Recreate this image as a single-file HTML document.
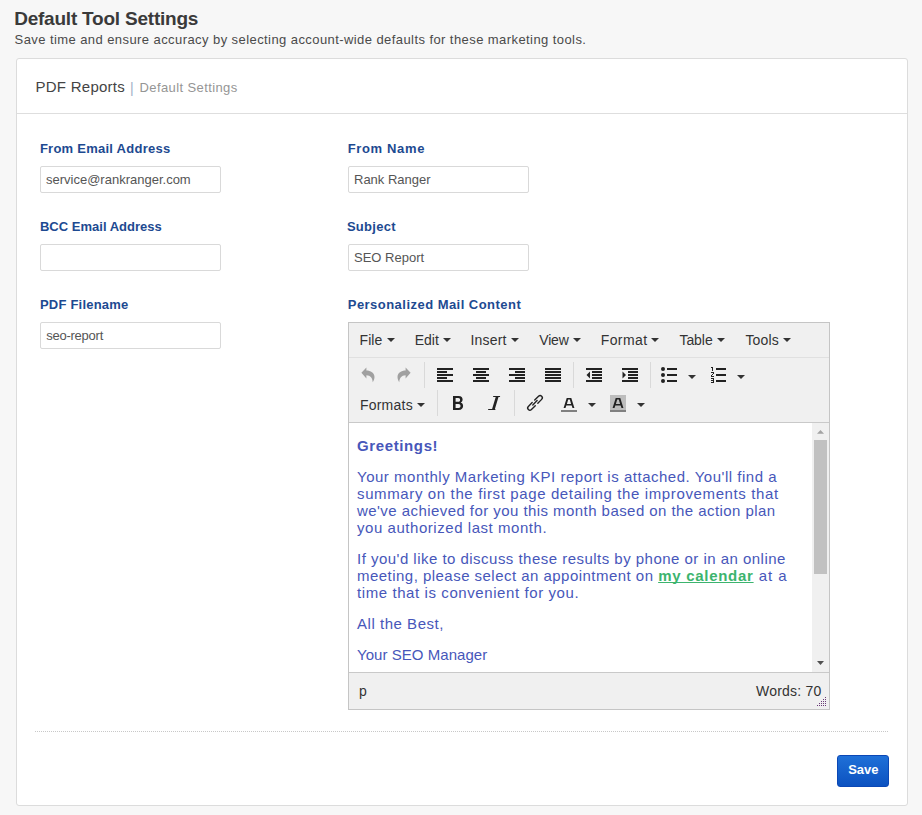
<!DOCTYPE html>
<html><head><meta charset="utf-8">
<style>
*{box-sizing:border-box}
html,body{margin:0;padding:0}
body{width:922px;height:815px;overflow:hidden;background:#f7f7f7;position:relative;font-family:"Liberation Sans",sans-serif;}
.a{position:absolute;white-space:nowrap}
.t{line-height:20px;height:20px}
#title{left:15px;top:10px;font-size:18px;font-weight:bold;color:#3a3a3a;letter-spacing:0.2px}
#sub{left:15px;top:30px;font-size:13px;color:#4a4a4a;letter-spacing:0.4px}
#panel{left:16px;top:58px;width:892px;height:748px;border:1px solid #dcdcdc;border-radius:3px;background:#fff}
#hdiv{left:17px;top:113px;width:890px;height:1px;background:#dedede}
#hname{left:35px;top:77px;font-size:15px;color:#444;letter-spacing:0.3px}
#hsep{left:130px;top:78px;font-size:14px;color:#9fb0c8}
#hdef{left:139px;top:78px;font-size:13px;color:#8a8a8a;letter-spacing:0.5px}
.lbl{font-size:13px;font-weight:bold;color:#1d4a91;letter-spacing:0.2px}
.inp{position:absolute;width:181px;height:27px;border:1px solid #d9d9d9;border-radius:2px;background:#fff}
.itx{font-size:13px;color:#555}
#ed{left:348px;top:322px;width:482px;height:388px;border:1px solid #c5c5c5;background:#f0f0f0}
#mdiv{left:349px;top:357px;width:480px;height:1px;background:#e0e0e0}
#tdiv{left:349px;top:422px;width:480px;height:1px;background:#c9c9c9}
#content{left:349px;top:423px;width:463px;height:249px;background:#fff}
#sdiv{left:349px;top:672px;width:480px;height:1px;background:#c9c9c9}
#track{left:812px;top:423px;width:17px;height:249px;background:#f0f0f0}
#thumb{left:814px;top:440px;width:13px;height:134px;background:#c1c1c1}
.mi{font-size:14px;color:#333;line-height:20px;height:20px}
.ct{font-size:15px;color:#4757ba;line-height:17px;height:17px}
.ct b{font-weight:bold}
.lnk{font-weight:bold;color:#3cb46e;text-decoration:underline;text-decoration-skip-ink:none}
#dots{left:35px;top:731px;width:854px;height:1px;background-image:linear-gradient(to right,#c8c8c8 50%,transparent 50%);background-size:2px 1px}
#save{left:837px;top:755px;width:52px;height:32px;border:1px solid #0b47b5;border-radius:3px;background:linear-gradient(#1f70d8,#0c52c0)}
#savet{left:849px;top:760px;font-size:13px;font-weight:bold;color:#fff;letter-spacing:-0.2px}
svg.ov{position:absolute;left:0;top:0}
</style></head>
<body>
<div id="panel" class="a"></div>
<div id="hdiv" class="a"></div>
<div id="hsep" class="a t">|</div>


<div class="inp" style="left:40px;top:166px"></div>
<div class="inp" style="left:40px;top:244px"></div>
<div class="inp" style="left:40px;top:322px"></div>
<div class="inp" style="left:348px;top:166px"></div>
<div class="inp" style="left:348px;top:244px"></div>

<div id="ed" class="a"></div>
<div id="mdiv" class="a"></div>
<div id="tdiv" class="a"></div>
<div id="content" class="a"></div>
<div id="sdiv" class="a"></div>
<div id="track" class="a"></div>
<div id="thumb" class="a"></div>


<div class="a ct" style="left:357.0px;top:437px;letter-spacing:0.621px"><b>Greetings!</b></div>
<div class="a ct" style="left:357.0px;top:468px;letter-spacing:0.514px">Your monthly Marketing KPI report is attached. You&#39;ll find a</div>
<div class="a ct" style="left:357.0px;top:485px;letter-spacing:0.628px">summary on the first page detailing the improvements that</div>
<div class="a ct" style="left:357.0px;top:502px;letter-spacing:0.440px">we&#39;ve achieved for you this month based on the action plan</div>
<div class="a ct" style="left:357.0px;top:519px;letter-spacing:0.547px">you authorized last month.</div>
<div class="a ct" style="left:357.0px;top:550px;letter-spacing:0.475px">If you&#39;d like to discuss these results by phone or in an online</div>
<div class="a ct" style="left:357.0px;top:567px;letter-spacing:0.936px"><span style="letter-spacing:0.47px">meeting, please select an appointment on </span><span class="lnk" style="letter-spacing:0.72px">my calendar</span> at a</div>
<div class="a ct" style="left:357.0px;top:584px;letter-spacing:0.586px">time that is convenient for you.</div>
<div class="a ct" style="left:357.0px;top:615px;letter-spacing:0.530px">All the Best,</div>
<div class="a ct" style="left:357.0px;top:646px;letter-spacing:0.045px">Your SEO Manager</div>
<div id="title" class="a t" style="left:14.15px;top:9px;font-size:19px;font-weight:bold;color:#3a3a3a;letter-spacing:-0.216px">Default Tool Settings</div>
<div id="sub" class="a t" style="left:14.58px;top:30px;font-size:13px;color:#4a4a4a;letter-spacing:0.423px">Save time and ensure accuracy by selecting account-wide defaults for these marketing tools.</div>
<div id="hname" class="a t" style="left:35.50px;top:77px;font-size:15px;color:#444;letter-spacing:0.259px">PDF Reports</div>
<div id="hdef" class="a t" style="left:139.53px;top:78px;font-size:13px;color:#959595;letter-spacing:0.396px">Default Settings</div>
<div id="l1" class="a t" style="left:39.90px;top:139px;font-size:13px;font-weight:bold;color:#1d4a91;letter-spacing:0.253px">From Email Address</div>
<div id="l2" class="a t" style="left:39.90px;top:217px;font-size:13px;font-weight:bold;color:#1d4a91;letter-spacing:0.019px">BCC Email Address</div>
<div id="l3" class="a t" style="left:39.90px;top:295px;font-size:13px;font-weight:bold;color:#1d4a91;letter-spacing:0.222px">PDF Filename</div>
<div id="l4" class="a t" style="left:347.69px;top:139px;font-size:13px;font-weight:bold;color:#1d4a91;letter-spacing:0.652px">From Name</div>
<div id="l5" class="a t" style="left:346.90px;top:217px;font-size:13px;font-weight:bold;color:#1d4a91;letter-spacing:0.295px">Subject</div>
<div id="l6" class="a t" style="left:347.76px;top:295px;font-size:13px;font-weight:bold;color:#1d4a91;letter-spacing:0.467px">Personalized Mail Content</div>
<div id="i1" class="a t" style="left:46.00px;top:170px;font-size:13px;color:#555;letter-spacing:0.000px">service@rankranger.com</div>
<div id="i2" class="a t" style="left:46.18px;top:326px;font-size:13px;color:#555;letter-spacing:-0.242px">seo-report</div>
<div id="i3" class="a t" style="left:354.00px;top:170px;font-size:13px;color:#555;letter-spacing:0.000px">Rank Ranger</div>
<div id="i4" class="a t" style="left:354.00px;top:248px;font-size:13px;color:#555;letter-spacing:0.000px">SEO Report</div>
<div id="m1" class="a t" style="left:359.52px;top:330px;font-size:14px;color:#333;letter-spacing:0.071px">File</div>
<div id="m2" class="a t" style="left:414.76px;top:330px;font-size:14px;color:#333;letter-spacing:-0.031px">Edit</div>
<div id="m3" class="a t" style="left:470.46px;top:330px;font-size:14px;color:#333;letter-spacing:0.195px">Insert</div>
<div id="m4" class="a t" style="left:539.25px;top:330px;font-size:14px;color:#333;letter-spacing:-0.188px">View</div>
<div id="m5" class="a t" style="left:600.73px;top:330px;font-size:14px;color:#333;letter-spacing:0.398px">Format</div>
<div id="m6" class="a t" style="left:679.44px;top:330px;font-size:14px;color:#333;letter-spacing:-0.051px">Table</div>
<div id="m7" class="a t" style="left:745.44px;top:330px;font-size:14px;color:#333;letter-spacing:0.171px">Tools</div>
<div id="m8" class="a t" style="left:359.90px;top:395px;font-size:14px;color:#333;letter-spacing:0.235px">Formats</div>
<div id="s1" class="a t" style="left:359.00px;top:681px;font-size:14px;color:#333;letter-spacing:0.000px">p</div>
<div id="s2" class="a t" style="left:756.10px;top:681px;font-size:14px;color:#333;letter-spacing:0.204px">Words: 70</div>

<svg class="ov" width="922" height="815" viewBox="0 0 922 815">
 <g fill="#333">
  <!-- menu carets -->
  <path d="M387 338h8l-4 4z"/><path d="M443 338h8l-4 4z"/><path d="M511 338h8l-4 4z"/><path d="M573 338h8l-4 4z"/>
  <path d="M651 338h8l-4 4z"/><path d="M717 338h8l-4 4z"/><path d="M783 338h8l-4 4z"/>
  <!-- toolbar carets -->
  <path d="M688 375h8l-4 4z"/><path d="M737 375h8l-4 4z"/>
  <path d="M417 403h8l-4 4z"/><path d="M588 403h8l-4 4z"/><path d="M637 403h8l-4 4z"/>
 </g>
 <!-- separators -->
 <g fill="#d9d9d9">
  <rect x="424" y="362" width="1" height="26"/>
  <rect x="573" y="362" width="1" height="26"/>
  <rect x="650" y="362" width="1" height="26"/>
  <rect x="437" y="390" width="1" height="26"/>
  <rect x="514" y="390" width="1" height="26"/>
 </g>
 <!-- undo / redo -->
 <g fill="#a0a0a0">
  <path d="M361.4 372.8 L366.4 367.5 V370.6 C370.5 370.6 374.5 373 374.5 377 C374.5 379 373.5 381 372.7 382.2 C372.6 378.5 370.5 375.3 366.4 375.3 V378.5 Z"/>
  <path d="M410.6 372.8 L405.6 367.5 V370.6 C401.5 370.6 397.5 373 397.5 377 C397.5 379 398.5 381 399.3 382.2 C399.4 378.5 401.5 375.3 405.6 375.3 V378.5 Z"/>
 </g>
 <g fill="#222">
  <!-- align left -->
  <rect x="437" y="368" width="16" height="2"/><rect x="437" y="371" width="10" height="2"/><rect x="437" y="374" width="16" height="2"/><rect x="437" y="377" width="10" height="2"/><rect x="437" y="380" width="16" height="2"/>
  <!-- align center -->
  <rect x="473" y="368" width="16" height="2"/><rect x="476" y="371" width="10" height="2"/><rect x="473" y="374" width="16" height="2"/><rect x="476" y="377" width="10" height="2"/><rect x="473" y="380" width="16" height="2"/>
  <!-- align right -->
  <rect x="509" y="368" width="16" height="2"/><rect x="515" y="371" width="10" height="2"/><rect x="509" y="374" width="16" height="2"/><rect x="515" y="377" width="10" height="2"/><rect x="509" y="380" width="16" height="2"/>
  <!-- justify -->
  <rect x="545" y="368" width="16" height="2"/><rect x="545" y="371" width="16" height="2"/><rect x="545" y="374" width="16" height="2"/><rect x="545" y="377" width="16" height="2"/><rect x="545" y="380" width="16" height="2"/>
  <!-- outdent -->
  <rect x="586" y="368" width="16" height="2"/><rect x="592" y="371" width="10" height="2"/><rect x="592" y="374" width="10" height="2"/><rect x="592" y="377" width="10" height="2"/><rect x="586" y="380" width="16" height="2"/>
  <path d="M586.5 375 L590 371.5 L590 378.5 Z"/>
  <!-- indent -->
  <rect x="622" y="368" width="16" height="2"/><rect x="628" y="371" width="10" height="2"/><rect x="628" y="374" width="10" height="2"/><rect x="628" y="377" width="10" height="2"/><rect x="622" y="380" width="16" height="2"/>
  <path d="M626 375 L622.5 371.5 L622.5 378.5 Z"/>
  <!-- bullist -->
  <circle cx="663" cy="369" r="2"/><circle cx="663" cy="375" r="2"/><circle cx="663" cy="381" r="2"/>
  <rect x="667" y="368" width="10" height="2"/><rect x="667" y="374" width="10" height="2"/><rect x="667" y="380" width="10" height="2"/>
  <!-- numlist -->
  <rect x="716" y="368" width="10" height="2"/><rect x="716" y="374" width="10" height="2"/><rect x="716" y="380" width="10" height="2"/>
  <path d="M711 367h2v4h-1v-3h-1z"/>
  <path d="M711 372h3v2h-1v1h-1v1h2v1h-3v-2h1v-1h1v-1h-2z"/>
  <path d="M711 378h3v5h-3v-1h2v-1h-2v-1h2v-1h-2z"/>
  <!-- bold B -->
  <path fill-rule="evenodd" d="M453 396 H458.6 C461.5 396 462.6 397.8 462.6 399.5 C462.6 401 461.8 402 460.7 402.6 C462.3 403.1 463.1 404.4 463.1 406 C463.1 408.3 461.6 410 458.6 410 H453 Z M455.6 398.1 V401.8 H458.2 C459.5 401.8 460.1 401 460.1 399.95 C460.1 398.9 459.5 398.1 458.2 398.1 Z M455.6 403.9 V407.9 H458.5 C459.9 407.9 460.5 407 460.5 405.9 C460.5 404.8 459.9 403.9 458.5 403.9 Z"/>
  <!-- italic I -->
  <path d="M493.3 396 H500.2 L499.9 397.1 H498.5 L494.9 408.9 H495.5 L495.2 410 H488 L488.3 408.9 H492.1 L495.7 397.1 H493 Z"/>
 </g>
 <!-- link -->
 <g fill="none" stroke="#222" stroke-width="1.4" stroke-linecap="round">
  <path transform="translate(538.6 399.3) rotate(-45)" d="M-3.3 -2.2 L2.1 -2.2 A2.2 2.2 0 0 1 2.1 2.2 L-3.3 2.2"/>
  <path transform="translate(531.4 406.5) rotate(-45)" d="M3.3 -2.2 L-2.1 -2.2 A2.2 2.2 0 0 0 -2.1 2.2 L3.3 2.2"/>
  <path d="M532.8 404.9 L537.1 400.6"/>
 </g>
 <!-- forecolor -->
 <rect x="561" y="410" width="16" height="2" fill="#808080"/>
 <path fill="#222" fill-rule="evenodd" d="M566.7 398 L571.3 398 L574.4 408 L572.5 408 L571.7 405.5 L566.3 405.5 L565.5 408 L563.6 408 Z M568.2 399.6 L569.8 399.6 L571.1 403.9 L566.9 403.9 Z"/>
 <!-- backcolor -->
 <rect x="610" y="395" width="16" height="17" fill="#bdbdbd"/>
 <rect x="610" y="410" width="16" height="2" fill="#808080"/>
 <path fill="#222" fill-rule="evenodd" d="M615.7 398 L620.3 398 L623.4 408 L621.5 408 L620.7 405.5 L615.3 405.5 L614.5 408 L612.6 408 Z M617.2 399.6 L618.8 399.6 L620.1 403.9 L615.9 403.9 Z"/>
 <!-- scroll arrows -->
 <path fill="#a3a3a3" d="M817 433.7 L820.5 430 L824 433.7 Z"/>
 <path fill="#505050" d="M817 661 L824 661 L820.5 665 Z"/>
 <!-- resize grip -->
 <g fill="#6a3c78">
  <rect x="825" y="697" width="1" height="1"/>
  <rect x="823" y="699" width="1" height="1"/><rect x="825" y="699" width="1" height="1"/>
  <rect x="821" y="701" width="1" height="1"/><rect x="823" y="701" width="1" height="1"/><rect x="825" y="701" width="1" height="1"/>
  <rect x="819" y="703" width="1" height="1"/><rect x="821" y="703" width="1" height="1"/><rect x="823" y="703" width="1" height="1"/><rect x="825" y="703" width="1" height="1"/>
  <rect x="817" y="705" width="1" height="1"/><rect x="819" y="705" width="1" height="1"/><rect x="821" y="705" width="1" height="1"/><rect x="823" y="705" width="1" height="1"/><rect x="825" y="705" width="1" height="1"/>
 </g>
</svg>

<div id="dots" class="a"></div>
<div id="save" class="a"></div>
<div id="savet" class="a t" style="left:848.18px;top:760px;font-size:13px;font-weight:bold;color:#fff;letter-spacing:-0.014px">Save</div>
</body></html>
